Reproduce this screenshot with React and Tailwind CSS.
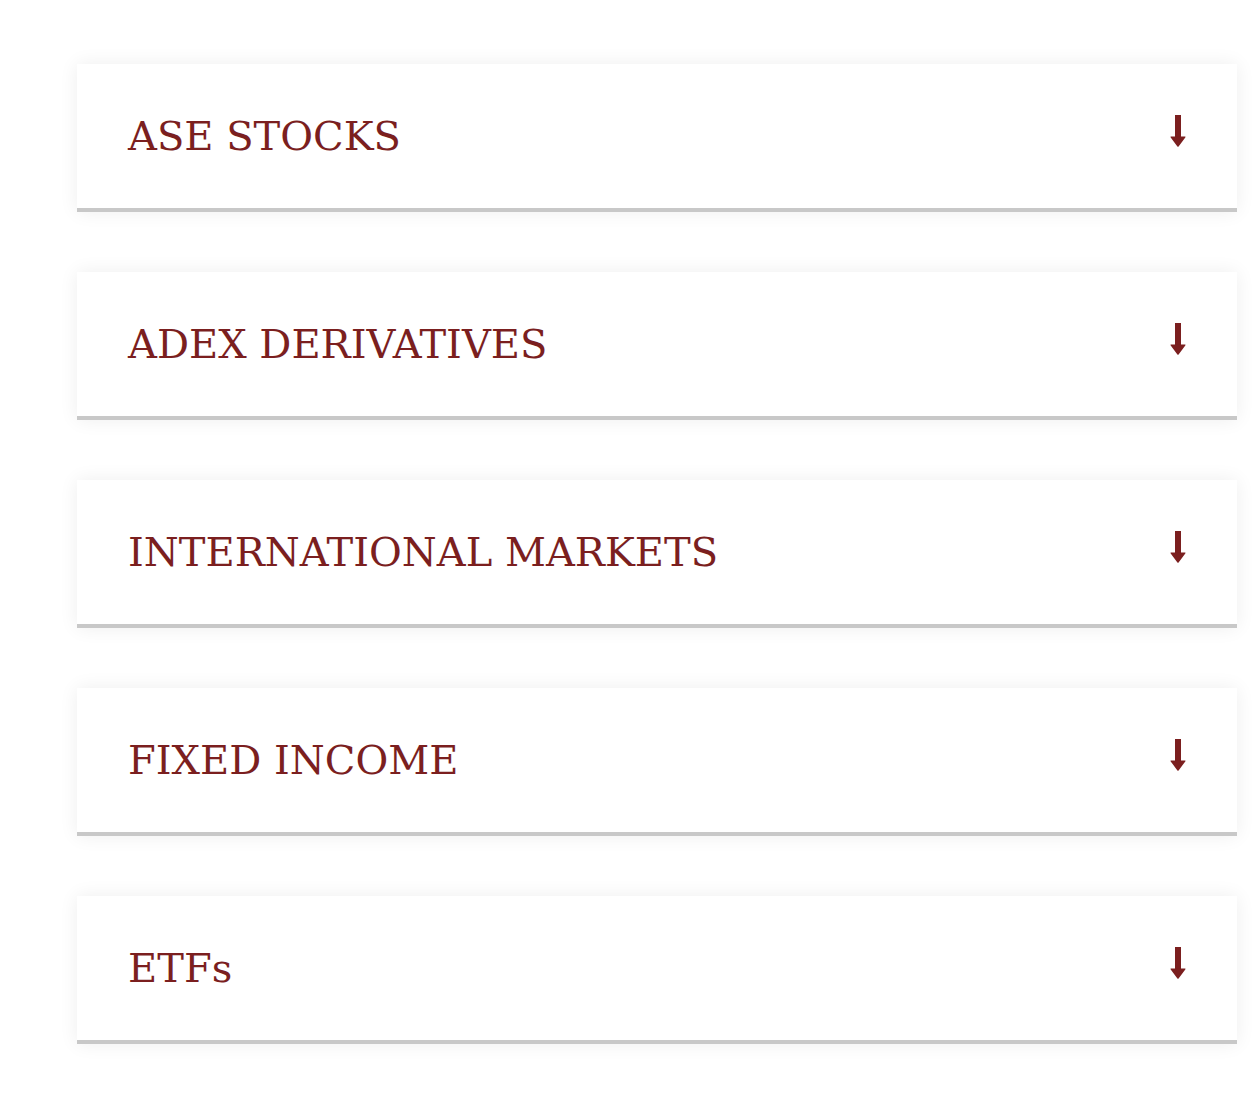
import React from 'react';

const markets = [
  'ASE STOCKS',
  'ADEX DERIVATIVES',
  'INTERNATIONAL MARKETS',
  'FIXED INCOME',
  'ETFs',
];

// long down arrow, drawn to sit in the right side of each panel header
const LongArrowDown = () => (
  <svg width="16" height="32" viewBox="0 0 16 32" className="shrink-0">
    <rect x="5" y="0" width="6" height="23" fill="#7b1f1f" />
    <path d="M1 21.5 L15 21.5 Q16 21.5 15.3 22.4 L8.6 31.4 Q8 32 7.4 31.4 L0.7 22.4 Q0 21.5 1 21.5 Z" fill="#7b1f1f" />
  </svg>
);

const MarketPanel = ({ title }) => (
  <button
    type="button"
    className="flex h-[148px] w-full items-center justify-between border-b-4 border-[#c8c8c8] bg-white pl-[51px] pr-[51px] text-left shadow-[0_0_18px_rgba(0,0,0,0.07)]"
  >
    <span className="text-[40px] leading-none text-[#7b1f1f] [font-family:'DejaVu_Serif',serif]">
      {title}
    </span>
    <span className="-mt-[10px]">
      <LongArrowDown />
    </span>
  </button>
);

export default function App() {
  return (
    <div className="min-h-[1098px] bg-white pl-[77px] pt-[64px]">
      <div className="flex w-[1160px] flex-col gap-[60px]">
        {markets.map((m) => (
          <MarketPanel key={m} title={m} />
        ))}
      </div>
    </div>
  );
}
